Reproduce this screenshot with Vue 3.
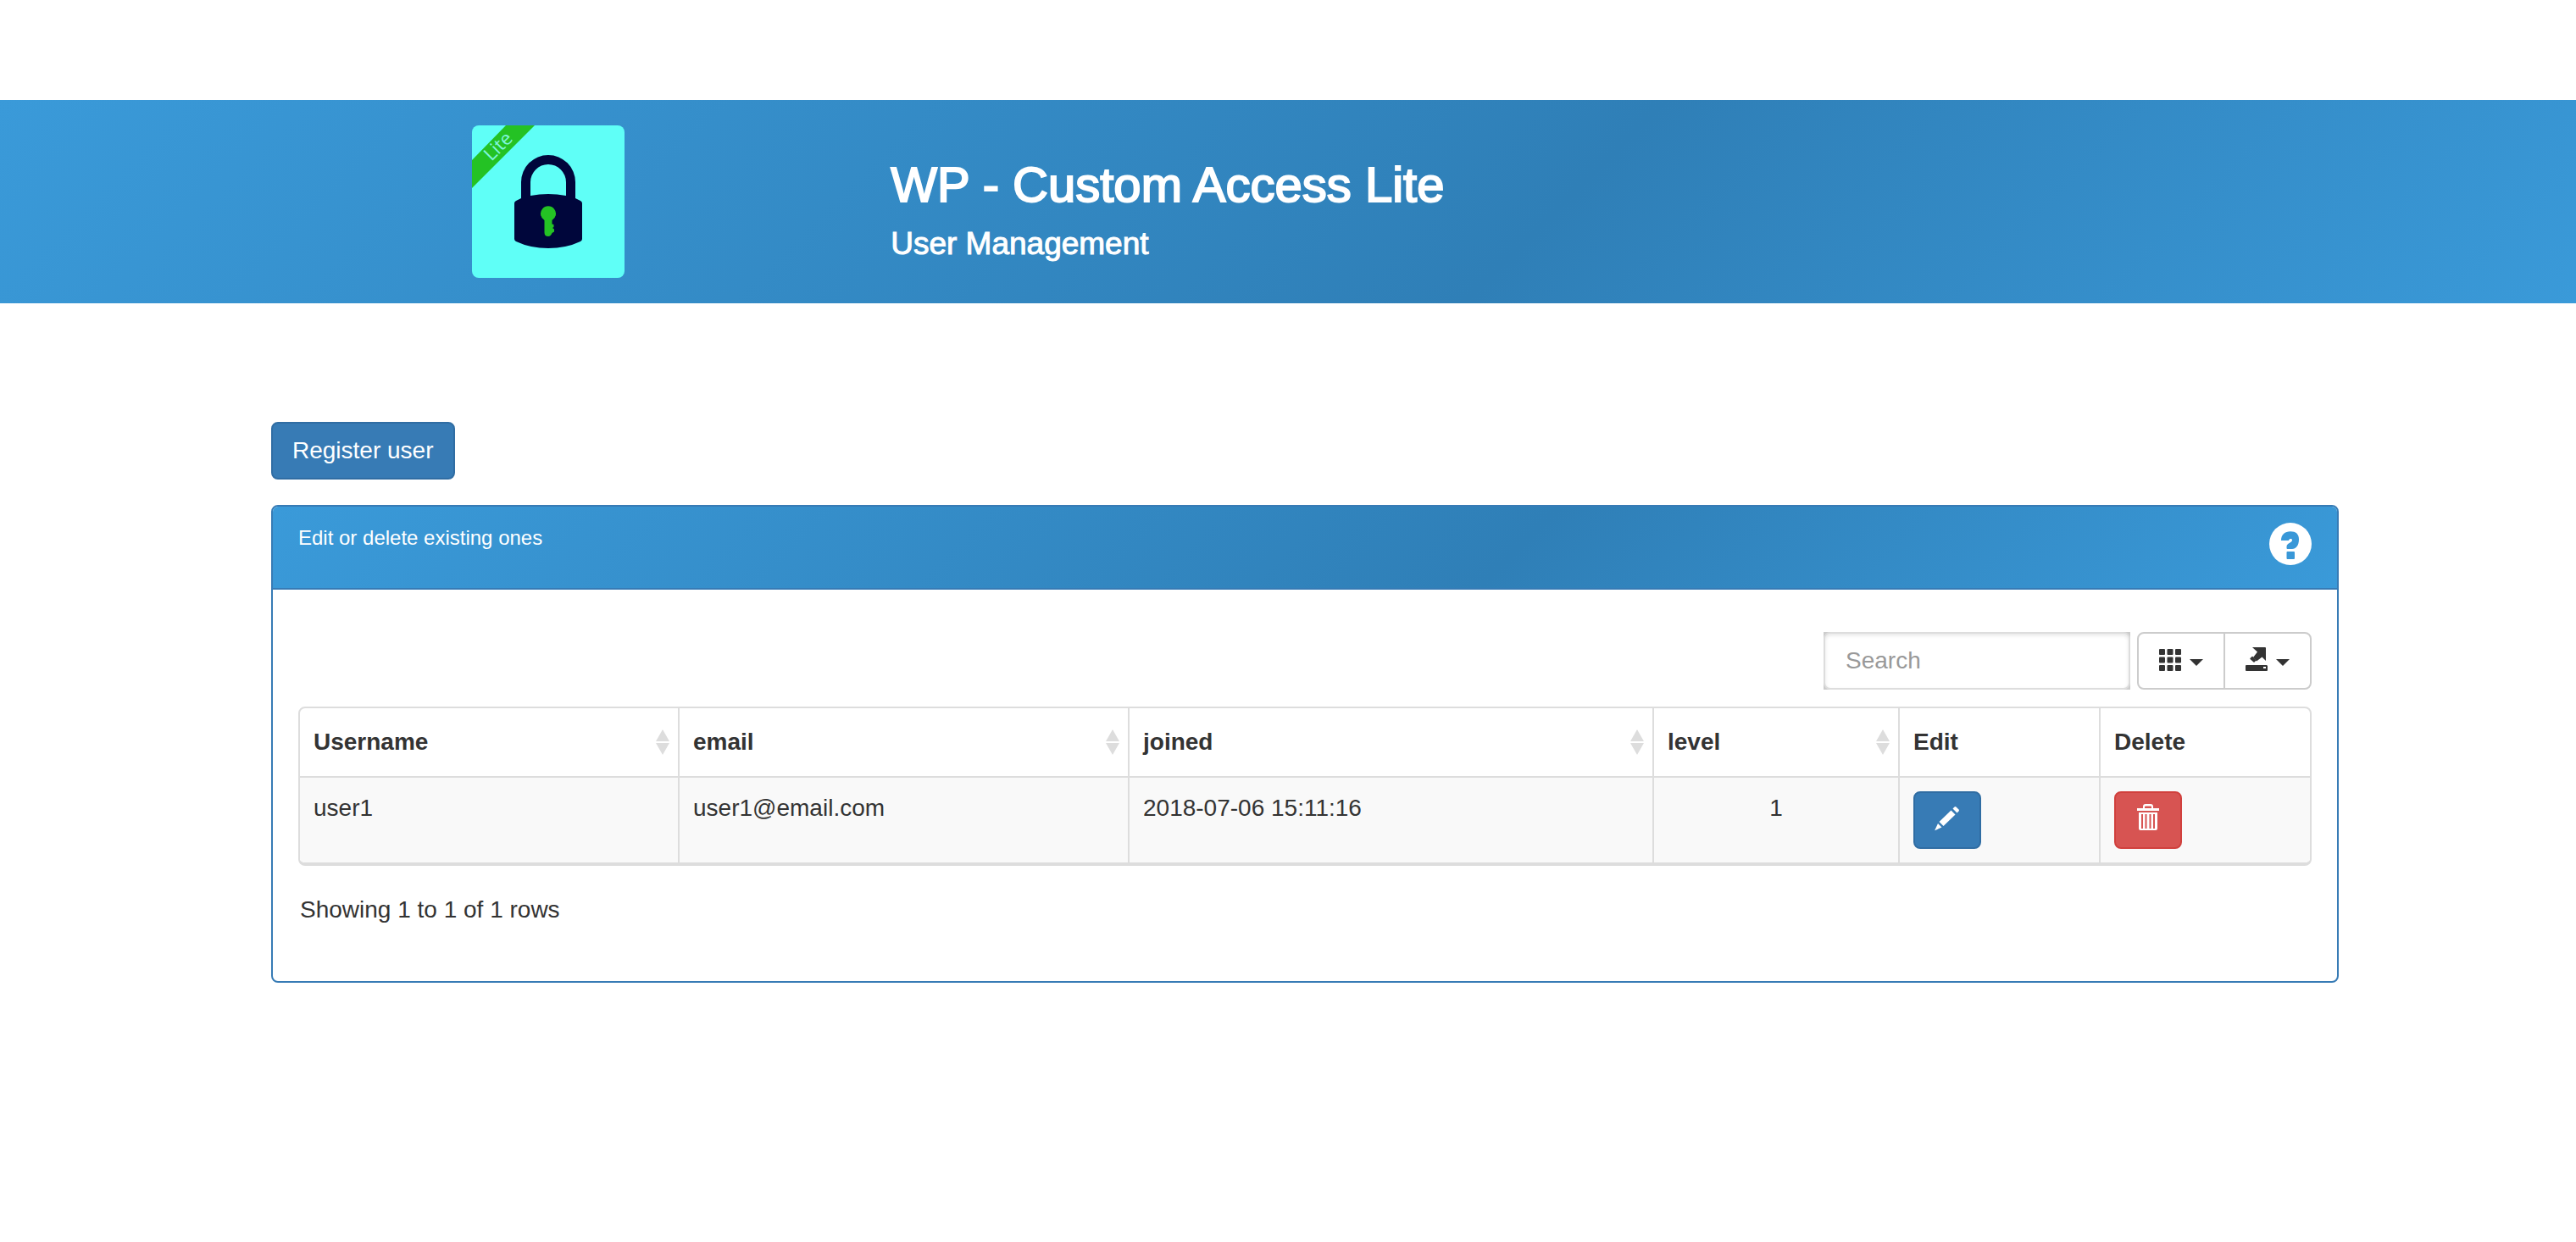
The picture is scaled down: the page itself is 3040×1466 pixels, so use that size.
<script setup>
import { ref, computed } from 'vue'

const columns = [
  { key: 'username', label: 'Username', sortable: true, weight: 448 },
  { key: 'email', label: 'email', sortable: true, weight: 531 },
  { key: 'joined', label: 'joined', sortable: true, weight: 619 },
  { key: 'level', label: 'level', sortable: true, weight: 290 },
  { key: 'edit', label: 'Edit', sortable: false, weight: 237 },
  { key: 'delete', label: 'Delete', sortable: false, weight: 247 },
]
const totalWeight = columns.reduce((sum, c) => sum + c.weight, 0)

const users = ref([
  { username: 'user1', email: 'user1@email.com', joined: '2018-07-06 15:11:16', level: 1 },
])

const search = ref('')
const visibleUsers = computed(() =>
  users.value.filter((u) =>
    (u.username + ' ' + u.email).toLowerCase().includes(search.value.toLowerCase())
  )
)
</script>

<template>
  <div class="page">
    <header class="banner">
      <div class="banner-logo">
        <svg class="logo" viewBox="0 0 180 180" role="img" aria-label="Custom Access logo">
          <rect width="180" height="180" rx="8" fill="#5ffff7" />
          <path d="M40 0H74L0 74V41Z" fill="#24c224" />
          <text class="logo-text" transform="translate(23 43) rotate(-45)">Lite</text>
          <path
            fill="#00063b"
            d="M58 86V67a32 32 0 0 1 64 0v19l6 3q2 1 2 3v42q0 2-2 3-17 8-38 8t-38-8q-2-1-2-3V92q0-2 2-3zM69 83q21-4 42 0V67a21 21 0 0 0-42 0z"
          />
          <path
            fill="#24c224"
            d="M85.500 112a9 9 0 1 1 9 0v4.500l2 .5v3l-1.500 1 2 1.500v3l-2.500 1.500q-1.500 4-4.500 4-4.500 0-4.500-4.500z"
          />
        </svg>
      </div>
      <div class="banner-titles">
        <h1>WP - Custom Access Lite</h1>
        <h2>User Management</h2>
      </div>
    </header>

    <main class="content">
      <button type="button" class="btn btn-primary">Register user</button>

      <section class="panel">
        <div class="panel-heading">
          <h3>Edit or delete existing ones</h3>
          <a href="#help" class="help" aria-label="Help">
            <svg viewBox="0 0 50 50" width="50" height="50" aria-hidden="true">
              <circle cx="25" cy="25" r="25" fill="#fff" />
              <path
                fill="#3998d8"
                d="M14 21c0-7 4.500-10.700 11-10.700s10 3.200 10 9.200c0 7.500-3.500 11.500-8 11.500h-5.500q-1 0-1-1v-1.500c0-5 6.500-4.500 6.500-8 0-2-3.500-2-4 .5zM21.500 34h7.500q1 0 1 1v7q0 1-1 1h-7.500q-1 0-1-1v-7q0-1 1-1z"
              />
            </svg>
          </a>
        </div>

        <div class="panel-body">
          <div class="toolbar">
            <div class="search">
              <input v-model="search" type="text" placeholder="Search" aria-label="Search" />
            </div>
            <div class="btn-group">
              <button type="button" class="btn btn-default" aria-label="Columns">
                <svg viewBox="0 0 28 32" width="28" height="32" fill="#333" aria-hidden="true">
                  <template v-for="r in 3" :key="r">
                    <rect
                      v-for="c in 3"
                      :key="c"
                      :x="(c - 1) * 9.500"
                      :y="(r - 1) * 9.500 + 2"
                      width="7"
                      height="7"
                      rx="1"
                    />
                  </template>
                </svg>
                <span class="caret"></span>
              </button>
              <button type="button" class="btn btn-default" aria-label="Export">
                <svg viewBox="0 0 28 32" width="28" height="32" fill="#333" aria-hidden="true">
                  <path d="M8 0h15q1 0 1 1v15l-4.500-4.500-6.500 5-4-4.500 5-6.500z" />
                  <path d="M5.500 13l2-2q1-.5 1.500.5l3 3.500q.5.500 0 1l-1.500 1.500q-.5.500-1 0L5.500 14q-.5-.5 0-1z" />
                  <path
                    fill-rule="evenodd"
                    d="M1 21h24l1 1v5q0 1-1 1H1q-1 0-1-1v-5q0-1 1-1zM21 23v2h3v-2z"
                  />
                </svg>
                <span class="caret"></span>
              </button>
            </div>
          </div>

          <div class="table-frame">
            <table>
              <colgroup>
                <col
                  v-for="col in columns"
                  :key="col.key"
                  :style="{ width: (col.weight / totalWeight) * 100 + '%' }"
                />
              </colgroup>
              <thead>
                <tr>
                  <th v-for="col in columns" :key="col.key" scope="col">
                    <div class="th-inner">
                      <span>{{ col.label }}</span>
                      <svg
                        v-if="col.sortable"
                        class="sort"
                        viewBox="0 0 16 30"
                        width="16"
                        height="30"
                        fill="#ddd"
                        aria-hidden="true"
                      >
                        <path d="M8 0l8 14H0zM0 16h16L8 30z" />
                      </svg>
                    </div>
                  </th>
                </tr>
              </thead>
              <tbody>
                <tr v-for="user in visibleUsers" :key="user.username">
                  <td>{{ user.username }}</td>
                  <td>{{ user.email }}</td>
                  <td>{{ user.joined }}</td>
                  <td class="center">{{ user.level }}</td>
                  <td>
                    <button type="button" class="btn btn-primary btn-icon" aria-label="Edit">
                      <svg viewBox="0 0 30 32" width="30" height="32" fill="#fff" aria-hidden="true">
                        <path d="M23.500 2.500q1-1 2 0l3 3q1 1 0 2L26.500 9.500 21.500 4.500z" />
                        <path d="M19.500 6.500l5 5L10.500 25l-5-5z" />
                        <path d="M4 22l4.500 4.500L1 30q-1 .5-.5-.5z" />
                      </svg>
                    </button>
                  </td>
                  <td>
                    <button type="button" class="btn btn-danger btn-icon" aria-label="Delete">
                      <svg viewBox="0 0 26 34" width="26" height="34" fill="#fff" aria-hidden="true">
                        <path
                          fill-rule="evenodd"
                          d="M7 5V3q0-3 3-3h6q3 0 3 3v2h7v3H0V5zM9 5h8V3.500q0-1-1-1h-6q-1 0-1 1z"
                        />
                        <path
                          fill-rule="evenodd"
                          d="M2 10h22v19q0 2-2 2H4q-2 0-2-2zM5 12v17h2V12zM9.500 12v17h2V12zM14.500 12v17h2V12zM19 12v17h2V12z"
                        />
                      </svg>
                    </button>
                  </td>
                </tr>
              </tbody>
            </table>
          </div>

          <p class="summary">Showing 1 to 1 of 1 rows</p>
        </div>
      </section>
    </main>
  </div>
</template>

<style>
body {
  margin: 0;
  background: #fff;
}
</style>

<style scoped>
.page {
  padding-top: 118px;
  font-family: "Liberation Sans", Arial, sans-serif;
  font-size: 28px;
  line-height: 40px;
  color: #333;
}

.page * {
  box-sizing: border-box;
}

.banner,
.panel-heading {
  background: linear-gradient(135deg, #3a9ad9 0%, #2f7fb7 60%, #3a9ad9 100%);
  color: #fff;
}

.banner {
  display: grid;
  grid-template-columns: 808px 1fr;
  padding: 30px 0 30px 8%;
}

.banner-logo {
  display: flex;
  justify-content: center;
}

.logo {
  width: 180px;
  height: 180px;
}

.logo-text {
  font-family: "Open Sans", sans-serif;
  font-size: 22px;
  fill: #80f5dc;
}

.banner-titles {
  display: flex;
  flex-direction: column;
  gap: 18px;
  padding-top: 38px;
}

h1,
h2,
h3 {
  margin: 0;
  font-weight: 500;
}

h1 {
  font-size: 58px;
  line-height: 64px;
  -webkit-text-stroke: 2px #fff;
}

h2 {
  font-size: 37px;
  line-height: 40px;
  -webkit-text-stroke: 1px #fff;
}

h3 {
  font-size: 24px;
  line-height: 36px;
}

.content {
  padding: 140px 280px 80px 320px;
}

.btn {
  display: inline-flex;
  align-items: center;
  justify-content: center;
  height: 68px;
  padding: 0 23px;
  border: 2px solid transparent;
  border-radius: 8px;
  font-family: inherit;
  font-size: 28px;
  line-height: 40px;
  cursor: pointer;
}

.btn-primary {
  background: #377bb5;
  border-color: #306da3;
  color: #fff;
}

.btn-danger {
  background: #d75452;
  border-color: #d1403d;
}

.btn-icon {
  display: flex;
  width: 80px;
  padding: 0 0 4px;
}

.panel {
  margin-top: 30px;
  border: 2px solid #377bb5;
  border-radius: 8px;
  overflow: hidden;
}

.panel-heading {
  display: flex;
  justify-content: space-between;
  align-items: flex-start;
  padding: 19px 30px 20px;
  border-bottom: 2px solid #377bb5;
}

.help {
  height: 57px;
}

.help svg {
  display: block;
}

.panel-body {
  padding: 50px 30px 64px;
}

.toolbar {
  display: flex;
  justify-content: flex-end;
  gap: 8px;
  margin-bottom: 20px;
}

.search {
  width: 362px;
  height: 68px;
  background: #ccc;
}

.search input {
  display: block;
  width: 100%;
  height: 100%;
  padding: 0 24px;
  border: 2px solid #ddd;
  border-radius: 8px;
  background: #fff;
  box-shadow: inset 0 2px 4px rgba(0, 0, 0, 0.1);
  font-family: inherit;
  font-size: 28px;
  color: #555;
}

.search input::placeholder {
  color: #999;
}

.btn-group {
  display: flex;
}

.btn-default {
  gap: 8px;
  width: 104px;
  background: #fff;
  border-color: #ccc;
}

.btn-default:first-child {
  border-radius: 8px 0 0 8px;
}

.btn-default:last-child {
  margin-left: -2px;
  border-radius: 0 8px 8px 0;
}

.btn-default svg,
.btn-icon svg {
  flex: none;
}

.caret {
  flex: none;
  margin-top: 4px;
  border: 8px solid transparent;
  border-top-color: #333;
  border-bottom: 0;
}

.table-frame {
  border: 2px solid #ddd;
  border-bottom-width: 4px;
  border-radius: 8px;
  overflow: hidden;
}

table {
  width: 100%;
  table-layout: fixed;
  border-collapse: separate;
  border-spacing: 0;
}

th,
td {
  padding: 16px;
  border-right: 2px solid #ddd;
  text-align: left;
  vertical-align: top;
}

th:last-child,
td:last-child {
  border-right: 0;
}

th {
  padding: 20px 10px 20px 16px;
  border-bottom: 2px solid #ddd;
  font-weight: bold;
}

.th-inner {
  display: flex;
  justify-content: space-between;
  align-items: center;
}

tbody tr {
  background: #f9f9f9;
}

.center {
  text-align: center;
}

.summary {
  margin: 32px 0 0 2px;
}
</style>
